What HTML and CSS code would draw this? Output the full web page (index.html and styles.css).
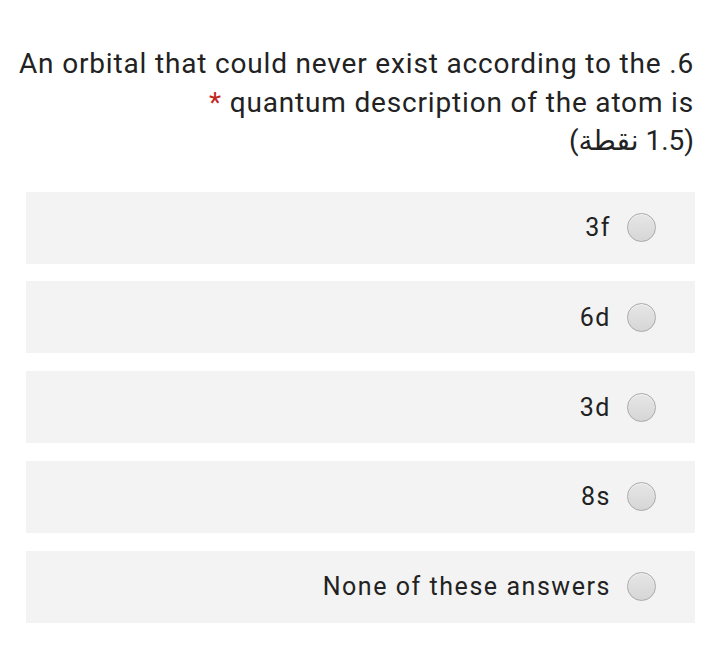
FILE: index.html
```html
<!DOCTYPE html>
<html lang="ar" dir="rtl">
<head>
<meta charset="utf-8">
<link rel="stylesheet" href="styles.css">
</head>
<body>
<div class="page">
  <div class="question">6. An orbital that could never exist according to the quantum description of the atom is <span class="req">*</span><br><span class="points">(1.5 نقطة)</span></div>
  <div class="options">
    <label class="option"><span class="radio"></span><span class="label">3f</span></label>
    <label class="option"><span class="radio"></span><span class="label">6d</span></label>
    <label class="option"><span class="radio"></span><span class="label">3d</span></label>
    <label class="option"><span class="radio"></span><span class="label">8s</span></label>
    <label class="option"><span class="radio"></span><span class="label">None of these answers</span></label>
  </div>
</div>
</body>
</html>
```

FILE: styles.css
```css
html, body {
  margin: 0;
  padding: 0;
  background: #ffffff;
}
body {
  font-family: Roboto, "Noto Sans", "DejaVu Sans", sans-serif;
  color: #222222;
}
.page {
  padding: 45px 15px 0 26px;
}
.question {
  font-size: 28px;
  letter-spacing: 0.83px;
  line-height: 38.5px;
  text-align: right;
  padding-right: 1px;
  margin-left: -20px;
}
.req {
  color: #c0281f;
}
.points {
  letter-spacing: 0;
}
.options {
  margin-top: 31px;
  display: flex;
  flex-direction: column;
  gap: 17.8px;
}
.option {
  height: 72px;
  background: #f3f3f3;
  display: flex;
  align-items: center;
  padding-right: 39px;
  gap: 16px;
}
.radio {
  width: 27px;
  height: 27px;
  border-radius: 50%;
  border: 1px solid #a9a9a9;
  background: linear-gradient(#e6e6e6, #d6d6d6);
  box-shadow: inset 0 1px 1px rgba(255,255,255,0.6);
  flex: none;
}
.label {
  font-size: 25px;
  letter-spacing: 1.55px;
}
```
